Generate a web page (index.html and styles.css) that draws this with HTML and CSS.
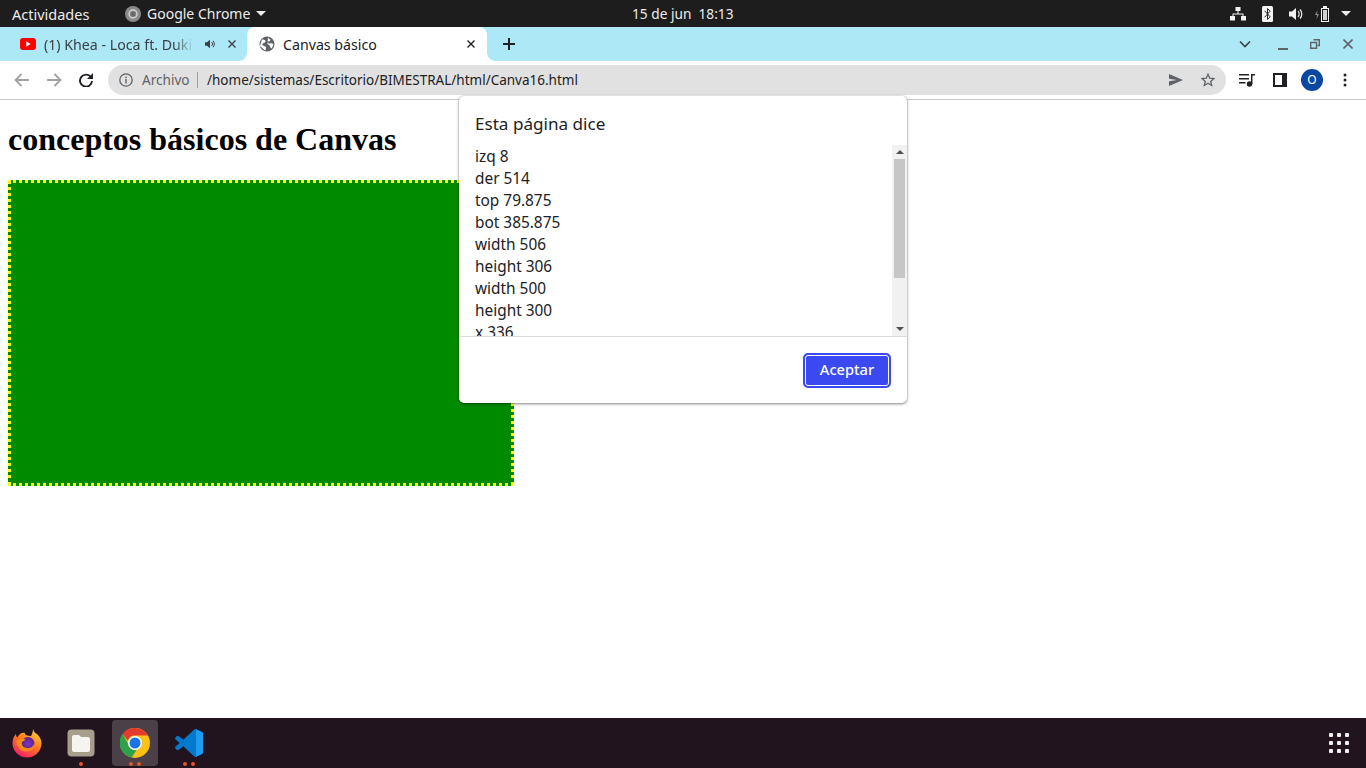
FILE: index.html
```html
<!DOCTYPE html>
<html lang="es">
<head>
<meta charset="utf-8">
<title>Canvas básico</title>
<link rel="stylesheet" href="styles.css">
</head>
<body>
<div class="screen">
  <header class="topbar">
    <span class="activities">Actividades</span>
    <div class="appmenu">
      <svg class="app-icon" width="18" height="18" viewBox="0 0 18 18"><circle cx="9" cy="9" r="8" fill="#8a8a8a"/><circle cx="9" cy="9" r="4" fill="none" stroke="#d4d4d4" stroke-width="1.400"/><circle cx="9" cy="9" r="2.400" fill="#6a6a6a"/></svg>
      <span class="app-name">Google Chrome</span>
      <span class="caret"></span>
    </div>
    <div class="clock">15 de jun&nbsp;&nbsp;18:13</div>
    <div class="tray">
      <svg width="16" height="14" viewBox="0 0 16 14" fill="#f2f2f2"><rect x="5.500" y="0" width="5" height="4"/><rect x="0" y="9" width="5" height="4.500"/><rect x="11" y="9" width="5" height="4.500"/><path d="M7.500 4h1v2.500h5V9h-1V7.500h-9V9h-1V6.500h5z"/></svg>
      <svg class="tray-bt" width="11" height="16" viewBox="0 0 11 16"><rect width="11" height="16" rx="1.500" fill="#f2f2f2"/><path d="M2.700 4.800l5.400 6-2.600 2.600V2.600l2.600 2.600-5.400 6" fill="none" stroke="#222" stroke-width="1"/></svg>
      <svg class="tray-vol" width="15" height="14" viewBox="0 0 15 14" fill="#f2f2f2"><path d="M0 4.500h3L7 1v12L3 9.500H0z"/><path d="M9 4.200a4 4 0 0 1 0 5.600M11 2.500a6.500 6.500 0 0 1 0 9" fill="none" stroke="#f2f2f2" stroke-width="1.200"/></svg>
      <svg class="tray-bat" width="14" height="16" viewBox="0 0 14 16"><path d="M2.500 4L0 9h2l-.5 4L4 8H2z" fill="#8a8a8a"/><rect x="6.500" y="2.500" width="7" height="13" fill="none" stroke="#f2f2f2"/><rect x="8" y="0" width="4" height="2" fill="#f2f2f2"/><rect x="8" y="4" width="4" height="10" fill="#d0d0d0"/></svg>
      <span class="caret tray-caret"></span>
    </div>
  </header>

  <div class="tabstrip">
    <div class="tab tab-inactive">
      <svg width="16" height="12" viewBox="0 0 16 12"><rect width="16" height="12" rx="3" fill="#f00"/><path d="M6.300 3.200l4.300 2.800-4.300 2.800z" fill="#fff"/></svg>
      <span class="tab-title tab-title-faded">(1) Khea - Loca ft. Duki</span>
      <svg class="tab-audio" width="10" height="10" viewBox="0 0 10 10" fill="#3c4043"><path d="M0 3.300h2L5 .8v8.400L2 6.700H0z"/><path d="M6.500 3a2.500 2.500 0 0 1 0 4M8 1.800a4.500 4.500 0 0 1 0 6.400" fill="none" stroke="#3c4043" stroke-width="1"/></svg>
      <svg class="tab-close" width="8" height="8" viewBox="0 0 8 8"><path d="M.5.500l7 7M7.500.500l-7 7" stroke="#3c4043" stroke-width="1.400"/></svg>
    </div>
    <div class="tab tab-active">
      <svg width="16" height="16" viewBox="0 0 16 16"><circle cx="8" cy="8" r="7.500" fill="#5f6368"/><path d="M3 3.500c2 0 3 .5 3.500 1.500S5 7 4.500 7 3 8 3.500 9s2 1 3 1.500.5 3-.5 4L1 10zM9 1c.5 1.500 1 2 2.500 2.500l-1 2C9 5 8 6 9 7s3.500 0 4.500.5l1 1.500-2 3.500c-1-.5-1.500-2-2-3L8.500 8" fill="#fff"/></svg>
      <span class="tab-title tab-title-active">Canvas básico</span>
      <svg class="tab-close" width="8" height="8" viewBox="0 0 8 8"><path d="M.5.500l7 7M7.500.500l-7 7" stroke="#202124" stroke-width="1.400"/></svg>
    </div>
    <svg class="tab-new" width="12" height="12" viewBox="0 0 12 12"><path d="M6 0v12M0 6h12" stroke="#202124" stroke-width="2"/></svg>
    <div class="window-controls">
      <svg class="wc-chevron" width="12" height="8" viewBox="0 0 12 8"><path d="M1 1.500l5 5 5-5" fill="none" stroke="#3c4043" stroke-width="1.600"/></svg>
      <svg class="wc-min" width="10" height="2" viewBox="0 0 10 2"><rect width="10" height="2" fill="#5f6368"/></svg>
      <svg class="wc-restore" width="10" height="10" viewBox="0 0 10 10"><path d="M3.500.7h5.800v5.800H7.500M.7 3.500h5.800v5.800H.7z" fill="none" stroke="#5f6368" stroke-width="1.400"/></svg>
      <svg class="wc-close" width="10" height="10" viewBox="0 0 10 10"><path d="M.5.500l9 9M9.500.500l-9 9" stroke="#5f6368" stroke-width="1.600"/></svg>
    </div>
  </div>

  <div class="toolbar">
    <svg class="nav nav-back" width="16" height="14" viewBox="0 0 16 14"><path d="M15 7H2M7.500 1L1.500 7l6 6" fill="none" stroke="#a0a3a6" stroke-width="1.800"/></svg>
    <svg class="nav nav-forward" width="16" height="14" viewBox="0 0 16 14"><path d="M1 7h13M8.500 1l6 6-6 6" fill="none" stroke="#a0a3a6" stroke-width="1.800"/></svg>
    <svg class="nav nav-reload" width="14" height="14" viewBox="0 0 14 14"><path d="M12 4.300A6 6 0 1 0 13 8" fill="none" stroke="#202124" stroke-width="1.900"/><path d="M14 0v6H8z" fill="#202124"/></svg>
    <div class="omnibox">
      <svg class="omni-info" width="14" height="14" viewBox="0 0 14 14"><circle cx="7" cy="7" r="6.200" fill="none" stroke="#5f6368" stroke-width="1.300"/><rect x="6.300" y="6" width="1.400" height="4.400" fill="#5f6368"/><rect x="6.300" y="3.600" width="1.400" height="1.500" fill="#5f6368"/></svg>
      <span class="omni-chip">Archivo</span>
      <span class="omni-sep"></span>
      <span class="omni-url">/home/sistemas/Escritorio/BIMESTRAL/html/Canva16.html</span>
      <svg class="omni-send" width="14" height="12" viewBox="0 0 14 12"><path d="M0 0l14 6-14 6 0-4.700L8 6 0 4.700z" fill="#5f6368"/></svg>
      <svg class="omni-star" width="14" height="14" viewBox="0 0 14 14"><path d="M7 1.300l1.700 3.900 4.200.4-3.200 2.800 1 4.100L7 10.300l-3.700 2.200 1-4.100L1.100 5.600l4.200-.4z" fill="none" stroke="#5f6368" stroke-width="1.300"/></svg>
    </div>
    <svg class="tool-media" width="16" height="14" viewBox="0 0 16 14" fill="#202124"><rect y="1" width="10" height="1.500"/><rect y="5" width="10" height="1.500"/><rect y="9" width="6.500" height="1.500"/><rect x="13" y="1" width="3" height="1.500"/><rect x="12" y="1" width="1.500" height="10"/><circle cx="10.500" cy="11" r="2.700"/></svg>
    <svg class="tool-panel" width="14" height="14" viewBox="0 0 14 14"><rect x="1" y="1" width="12" height="12" fill="#fff" stroke="#202124" stroke-width="2"/><rect x="9" y="1" width="4" height="12" fill="#202124"/></svg>
    <div class="avatar">O</div>
    <svg class="tool-menu" width="4" height="14" viewBox="0 0 4 14" fill="#202124"><circle cx="2" cy="2" r="1.500"/><circle cx="2" cy="7" r="1.500"/><circle cx="2" cy="12" r="1.500"/></svg>
  </div>

  <main class="page">
    <h1 class="page-title">conceptos básicos de Canvas</h1>
    <div class="canvas-box"></div>
  </main>

  <footer class="dock">
    <div class="dock-item">
      <svg width="30" height="30" viewBox="0 0 30 30">
        <defs>
          <linearGradient id="fx" x1="0.800" y1="0" x2="0.200" y2="1"><stop offset="0" stop-color="#ffd43a"/><stop offset=".45" stop-color="#ff7a1f"/><stop offset="1" stop-color="#f5156c"/></linearGradient>
          <radialGradient id="fxc" cx=".5" cy=".5" r=".6"><stop offset="0" stop-color="#7a35c8"/><stop offset="1" stop-color="#52227f"/></radialGradient>
        </defs>
        <path d="M21 1c1 3 2 4 4 5 3 3 4.500 6 4.500 9.500A14.500 14.500 0 0 1 15 29.500 14.500 14.500 0 0 1 .5 15C.5 11 2 8 4 6c0 2 .5 3 1.500 3.500C7 6 10 4 13 5c-1 2 3 3 6 3 1-2 2-4 2-7z" fill="url(#fx)"/>
        <circle cx="16" cy="15.500" r="6.500" fill="url(#fxc)"/>
        <path d="M4.500 13c3-2 6-2.500 9-1.500-1 1.500-3 1.500-4 3 0 4 4 6.500 8 5.500 3-.7 5-3 5-6 1 5-3 10-8.500 9.500C8 23 4 18.500 4.500 13z" fill="#ff8a1c"/>
      </svg>
      <div class="pips"></div>
    </div>
    <div class="dock-item">
      <svg width="28" height="28" viewBox="0 0 28 28"><rect x=".5" y=".5" width="27" height="27" rx="4" fill="#a79f8c"/><path d="M5 8a2 2 0 0 1 2-2h5l2 2h7a2 2 0 0 1 2 2v11a2 2 0 0 1-2 2H7a2 2 0 0 1-2-2z" fill="#f6f4f0"/></svg>
      <div class="pips"><span class="pip"></span></div>
    </div>
    <div class="dock-item dock-item-active">
      <svg width="30" height="30" viewBox="0 0 30 30"><circle cx="15" cy="15" r="15" fill="#fbc116"/><path d="M15 0a15 15 0 0 1 13 7.500H15a7.500 7.500 0 0 0-7.200 5.300L2.500 6A15 15 0 0 1 15 0z" fill="#e33b2e"/><path d="M2.500 6l6.500 11.300a7.500 7.500 0 0 0 7.500 5L11.500 29.500A15 15 0 0 1 2.500 6z" fill="#2ca24c"/><circle cx="15" cy="15" r="7" fill="#fff"/><circle cx="15" cy="15" r="5.500" fill="#1a73e8"/></svg>
      <div class="pips"><span class="pip"></span><span class="pip"></span></div>
    </div>
    <div class="dock-item">
      <svg width="28" height="28" viewBox="0 0 100 100"><path d="M70.900 99.300a6.200 6.200 0 0 0 5-.2l20.500-9.900a6.200 6.200 0 0 0 3.500-5.600V16.400a6.200 6.200 0 0 0-3.500-5.600L75.900.9a6.200 6.200 0 0 0-7.100 1.200L29.400 38 12.300 25a4.200 4.200 0 0 0-5.300.2l-5.500 5a4.200 4.200 0 0 0 0 6.200L16.300 50 1.500 63.500a4.200 4.200 0 0 0 0 6.200l5.500 5a4.200 4.200 0 0 0 5.300.2L29.400 62l39.400 36a6.200 6.200 0 0 0 2.100 1.300zM75 27.300L45.100 50 75 72.700z" fill="#007acc"/><path d="M75 .5l21.400 10.300a6.200 6.200 0 0 1 3.500 5.600v67.200a6.200 6.200 0 0 1-3.500 5.600L75 99.500V72.700V27.300z" fill="#1f9cf0"/></svg>
      <div class="pips"><span class="pip"></span><span class="pip"></span></div>
    </div>
    <div class="app-grid">
      <i></i><i></i><i></i><i></i><i></i><i></i><i></i><i></i><i></i>
    </div>
  </footer>

  <div class="dialog">
    <div class="dialog-title">Esta página dice</div>
    <div class="dialog-body">
      <div class="dialog-message">
        <div>izq 8</div>
        <div>der 514</div>
        <div>top 79.875</div>
        <div>bot 385.875</div>
        <div>width 506</div>
        <div>height 306</div>
        <div>width 500</div>
        <div>height 300</div>
        <div>x 336</div>
      </div>
      <div class="scrollbar">
        <div class="sb-btn"><span class="sb-up"></span></div>
        <div class="sb-track"><div class="sb-thumb"></div></div>
        <div class="sb-btn"><span class="sb-down"></span></div>
      </div>
    </div>
    <div class="dialog-footer">
      <button class="dialog-ok" type="button">Aceptar</button>
    </div>
  </div>
</div>
</body>
</html>
```
FILE: styles.css
```css
* { box-sizing: border-box; }
html, body { margin: 0; padding: 0; height: 100%; overflow: hidden; background: #fff; }
body { font-family: "Noto Sans", "Open Sans", sans-serif; }
svg { display: block; flex: none; }

.screen { position: relative; width: 1366px; height: 768px; display: flex; flex-direction: column; overflow: hidden; }

/* GNOME top bar */
.topbar { height: 27px; background: #1d1d1d; color: #ececec; font-size: 14px; display: flex; align-items: center; position: relative; flex: none; }
.activities { margin-left: 12px; width: 79px; font-size: 14.500px; white-space: nowrap; }
.appmenu { display: flex; align-items: center; margin-left: 33px; }
.app-name { margin-left: 5px; width: 104px; white-space: nowrap; }
.caret { width: 0; height: 0; border-left: 5px solid transparent; border-right: 5px solid transparent; border-top: 5px solid #ececec; margin-left: 5px; }
.clock { position: absolute; left: 632px; top: 0; line-height: 27px; font-size: 13.700px; white-space: nowrap; }
.tray { margin-left: auto; display: flex; align-items: center; padding-right: 15px; }
.tray-bt { margin-left: 16px; }
.tray-vol { margin-left: 16px; }
.tray-bat { margin-left: 11px; }
.tray-caret { margin-left: 12px; }

/* Chrome tab strip */
.tabstrip { height: 34px; background: #ace8f6; display: flex; align-items: flex-end; flex: none; }
.tab { height: 34px; display: flex; align-items: center; flex: none; }
.tab-inactive { width: 247px; padding-left: 20px; }
.tab-active { width: 240px; padding-left: 12px; background: #fff; border-radius: 8px 8px 0 0; position: relative; }
.tab-active::before, .tab-active::after { content: ""; position: absolute; bottom: 0; width: 8px; height: 8px; }
.tab-active::before { left: -8px; background: radial-gradient(circle at 0 0, transparent 7.500px, #fff 8px); }
.tab-active::after { right: -8px; background: radial-gradient(circle at 100% 0, transparent 7.500px, #fff 8px); }
.tab-title { font-size: 14.200px; line-height: 20px; padding-top: 1px; white-space: nowrap; overflow: hidden; }
.tab-title-faded { width: 150px; margin-left: 8px; color: #3c4043; -webkit-mask-image: linear-gradient(to right, #000 130px, transparent 150px); mask-image: linear-gradient(to right, #000 130px, transparent 150px); }
.tab-title-active { margin-left: 8px; width: 184px; color: #202124; }
.tab-audio { margin-left: 11px; }
.tab-inactive .tab-close { margin-left: 13px; }
.tab-new { margin: 0 0 11px 16px; }
.window-controls { margin-left: auto; height: 34px; display: flex; align-items: center; padding-right: 13px; }
.wc-min { margin-left: 27px; margin-top: 9px; }
.wc-restore { margin-left: 22px; }
.wc-close { margin-left: 23px; }

/* Chrome toolbar */
.toolbar { height: 39px; background: #fff; border-bottom: 1px solid #c9c9c9; display: flex; align-items: center; flex: none; padding: 0 0 1px 14px; }
.nav-forward { margin-left: 16px; }
.nav-reload { margin-left: 17px; }
.omnibox { width: 1118px; height: 30px; margin-left: 15px; background: #e1e1e1; border-radius: 15px; display: flex; align-items: center; padding-left: 11px; }
.omni-chip { margin-left: 9px; width: 48px; font-size: 13.600px; color: #5f6368; white-space: nowrap; }
.omni-sep { width: 1px; height: 16px; background: #9aa0a6; margin-left: 7px; }
.omni-url { margin-left: 9px; width: 375px; font-size: 13.500px; color: #202124; white-space: nowrap; }
.omni-send { margin-left: auto; }
.omni-star { margin-left: 18px; margin-right: 11px; }
.tool-media { margin-left: 13px; }
.tool-panel { margin-left: 18px; }
.avatar { width: 22px; height: 22px; border-radius: 50%; background: #0a47a1; color: #fff; font-size: 12px; display: flex; align-items: center; justify-content: center; margin-left: 14px; }
.tool-menu { margin-left: 20px; }

/* Page */
.page { flex: 1; background: #fff; padding: 0 8px; overflow: hidden; }
.page-title { margin: 21.440px 0; font-family: "Liberation Serif", "Times New Roman", serif; font-size: 32px; font-weight: bold; line-height: 37px; color: #000; white-space: nowrap; }
.canvas-box { width: 506px; height: 306px; background: #008a00; border: 3px dotted #ff0; }

/* Dock */
.dock { height: 50px; background: #21141f; display: flex; align-items: center; flex: none; padding-left: 4px; }
.dock-item { width: 46px; height: 46px; margin-right: 8px; border-radius: 4px; display: flex; align-items: center; justify-content: center; position: relative; }
.dock-item-active { background: #4b4048; }
.pips { position: absolute; left: 0; right: 0; bottom: 0; display: flex; justify-content: center; gap: 4px; height: 4px; }
.pip { width: 4px; height: 4px; border-radius: 50%; background: #e95420; }
.app-grid { margin-left: auto; margin-right: 17px; width: 20px; height: 20px; display: grid; grid-template-columns: repeat(3, 4px); grid-auto-rows: 4px; gap: 4px; }
.app-grid i { background: #f0f0f0; border-radius: 1px; }

/* Alert dialog */
.dialog { position: absolute; left: 459px; top: 96px; width: 448px; height: 307px; background: #fff; border-radius: 5px; box-shadow: 0 1px 3px rgba(0,0,0,.45), 0 0 2px rgba(0,0,0,.2); display: flex; flex-direction: column; color: #202124; }
.dialog-title { font-size: 17.100px; line-height: 22px; padding: 17px 16px 0; height: 49px; flex: none; white-space: nowrap; }
.dialog-body { height: 192px; display: flex; flex: none; border-bottom: 1px solid #dadce0; overflow: hidden; }
.dialog-message { flex: 1; margin-top: 1px; padding-left: 16px; font-size: 15.400px; line-height: 22px; color: #202124; }
.scrollbar { width: 15px; background: #f1f1f1; display: flex; flex-direction: column; }
.sb-btn { height: 14px; display: flex; align-items: center; justify-content: center; flex: none; }
.sb-up { width: 0; height: 0; border-left: 4px solid transparent; border-right: 4px solid transparent; border-bottom: 4px solid #505050; }
.sb-down { width: 0; height: 0; border-left: 4px solid transparent; border-right: 4px solid transparent; border-top: 4px solid #505050; }
.sb-track { flex: 1; padding: 0 2px; }
.sb-thumb { height: 119px; background: #c6c6c6; }
.dialog-footer { flex: 1; display: flex; justify-content: flex-end; align-items: flex-start; padding: 16px 16px 0 0; }
.dialog-ok { width: 88px; height: 35px; background: #3a4af0; color: #fff; border: 2px solid #3a4af0; outline: 1.500px solid #fff; outline-offset: -3.500px; border-radius: 5px; font-family: "Noto Sans", sans-serif; font-size: 14.600px; font-weight: 500; padding: 0 0 3px; }
```
